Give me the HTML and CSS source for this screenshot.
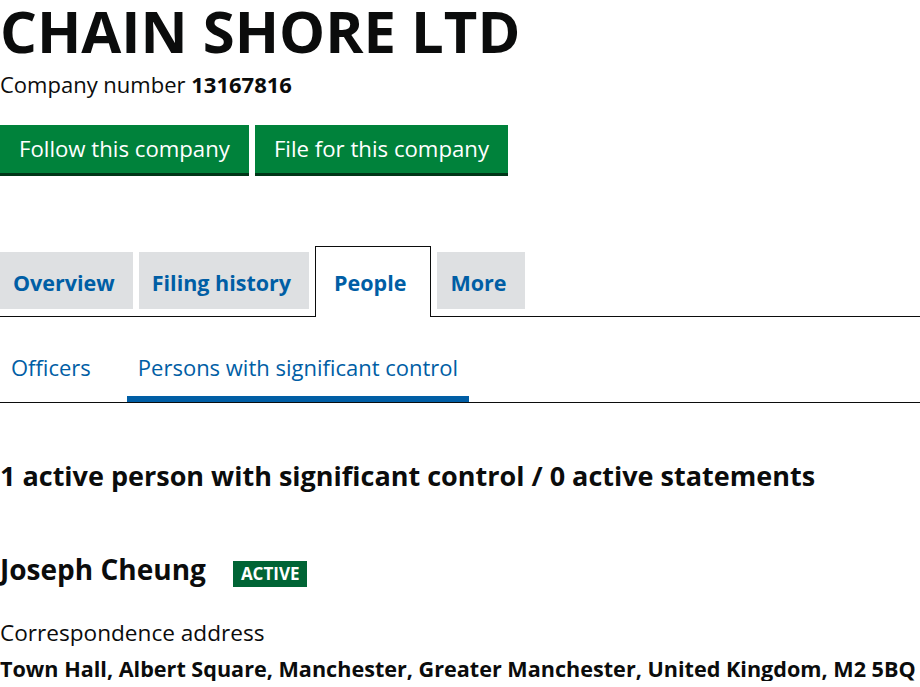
FILE: index.html
```html
<!DOCTYPE html>
<html lang="en">
<head>
<meta charset="utf-8">
<title>CHAIN SHORE LTD - Persons with significant control</title>
<link rel="stylesheet" href="styles.css">
</head>
<body>
<main class="page">
  <h1 class="company-name">CHAIN SHORE LTD</h1>
  <p class="company-number">Company number <strong>13167816</strong></p>
  <div class="actions">
    <a class="button" href="#">Follow this company</a>
    <a class="button" href="#">File for this company</a>
  </div>

  <nav class="tabs">
    <a class="tab" href="#">Overview</a>
    <a class="tab" href="#">Filing history</a>
    <a class="tab tab-active" href="#">People</a>
    <a class="tab" href="#">More</a>
  </nav>

  <nav class="subnav">
    <a class="subnav-item" href="#">Officers</a>
    <a class="subnav-item subnav-active" href="#">Persons with significant control</a>
  </nav>

  <h2 class="summary">1 active person with significant control / 0 active statements</h2>

  <div class="psc">
    <h3 class="psc-name">Joseph Cheung <span class="status">Active</span></h3>
    <p class="label">Correspondence address</p>
    <p class="value">Town Hall, Albert Square, Manchester, Greater Manchester, United Kingdom, M2 5BQ</p>
  </div>
</main>
</body>
</html>
```

FILE: styles.css
```css
html, body {
  margin: 0;
  padding: 0;
  background: #ffffff;
}

body {
  font-family: "Open Sans", "Liberation Sans", sans-serif;
  color: #0b0c0c;
}

.page {
  width: 920px;
}

.company-name {
  margin: 0;
  padding-top: 2px;
  font-size: 58px;
  line-height: 58px;
  height: 60px;
  font-weight: 700;
  white-space: nowrap;
}

.company-number {
  margin: 10px 0 0;
  font-size: 22px;
  line-height: 24px;
}

.company-number strong {
  font-weight: 700;
}

.actions {
  display: flex;
  gap: 6px;
  margin-top: 29px;
}

.button {
  display: block;
  background: #00823b;
  color: #ffffff;
  text-decoration: none;
  font-size: 22.2px;
  line-height: 48px;
  padding: 0 19px;
  box-shadow: 0 3px 0 #003618;
  height: 48px;
}

.tabs {
  display: flex;
  align-items: flex-end;
  gap: 6px;
  margin-top: 73px;
  border-bottom: 1px solid #0b0c0c;
}

.tab {
  display: block;
  box-sizing: border-box;
  background: #dee0e2;
  color: #005ea5;
  font-weight: 700;
  font-size: 21.5px;
  text-decoration: none;
  height: 57px;
  line-height: 57px;
  padding: 2px 18px 0 13px;
  margin-bottom: 7px;
}

.tab-active {
  background: #ffffff;
  border: 1px solid #0b0c0c;
  border-bottom: 0;
  height: 71px;
  line-height: 67px;
  padding: 2px 24px 0 18px;
  margin-bottom: -1px;
}

.subnav {
  display: flex;
  gap: 25px;
  border-bottom: 1px solid #0b0c0c;
  height: 86px;
  box-sizing: border-box;
  align-items: stretch;
}

.subnav-item {
  display: block;
  color: #005ea5;
  text-decoration: none;
  font-size: 22px;
  line-height: 24px;
  padding: 38px 11px 0;
  box-sizing: border-box;
}

.subnav-active {
  border-bottom: 6px solid #005ea5;
}

.summary {
  margin: 57px 0 0;
  font-size: 27px;
  line-height: 32px;
  font-weight: 700;
  white-space: nowrap;
}

.psc-name {
  display: flex;
  align-items: baseline;
  gap: 27px;
  margin: 61px 0 0;
  font-size: 28px;
  line-height: 32px;
  font-weight: 700;
}

.status {
  display: inline-block;
  background: #006435;
  color: #ffffff;
  font-size: 17px;
  line-height: 26px;
  padding: 0 8px;
  text-transform: uppercase;
  font-weight: 700;
}

.label {
  margin: 34px 0 0;
  font-size: 22.6px;
  line-height: 24px;
}

.value {
  margin: 12px 0 0;
  font-size: 21.6px;
  line-height: 24px;
  font-weight: 700;
  white-space: nowrap;
}
```
